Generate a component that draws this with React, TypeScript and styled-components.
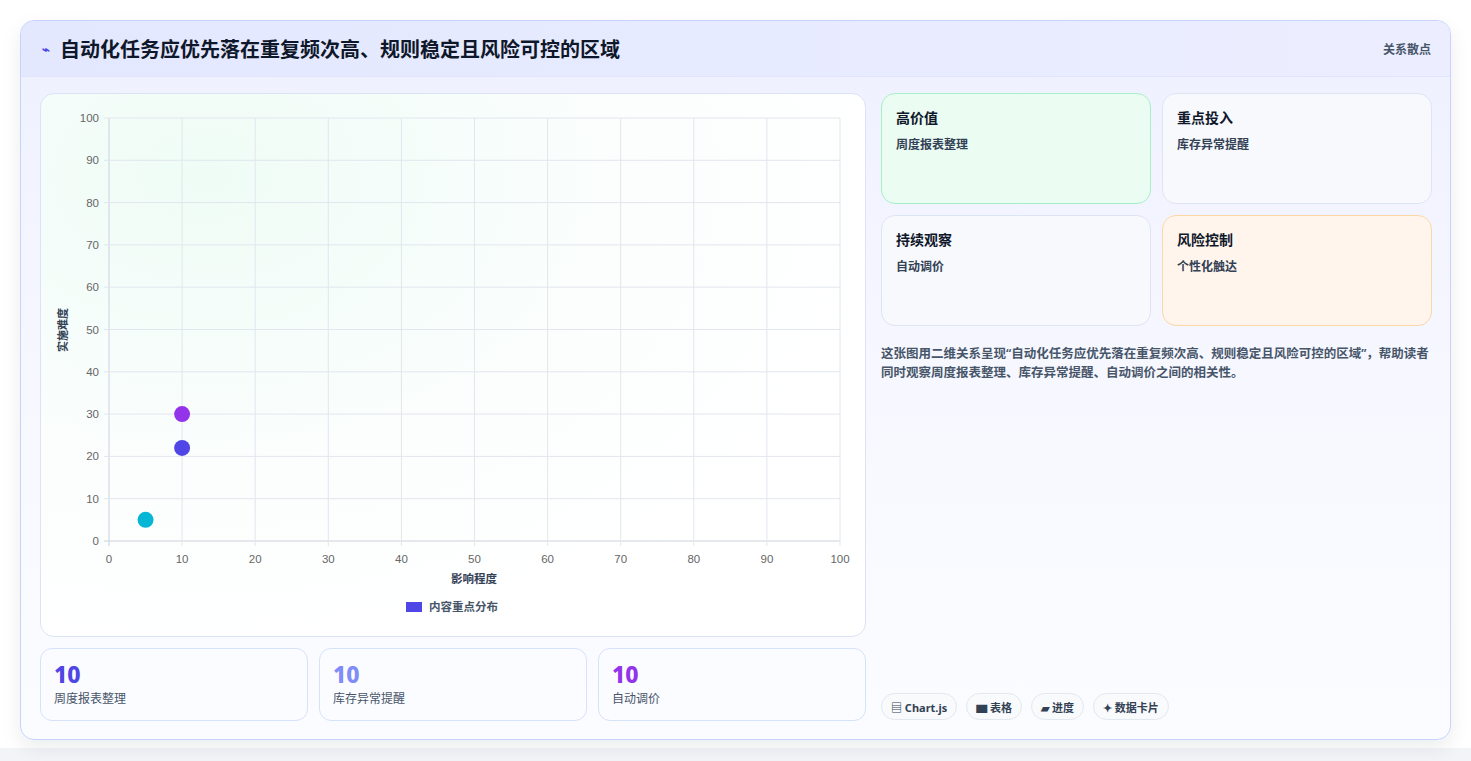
import styled, { createGlobalStyle } from 'styled-components'

const Global = createGlobalStyle`
  html, body { margin: 0; padding: 0; background: #fff; }
  body { font-family: "Noto Sans", "Noto Sans CJK SC", sans-serif; color: #0f172a; }
`

const Page = styled.div`
  padding: 20px 20px 21px 20px;
  height: 761px;
  box-sizing: border-box;
  background: linear-gradient(#fff 0, #fff 748px, #f3f4f8 748px);
`
const Card = styled.div`
  width: 1431px;
  height: 720px;
  box-sizing: border-box;
  border: 1px solid #c7d2fe;
  border-radius: 14px;
  overflow: hidden;
  background: linear-gradient(180deg, #eef0ff 0%, #f8f9ff 60%, #fbfcff 100%);
  box-shadow: 0 8px 20px rgba(15, 23, 42, 0.08);
  display: flex;
  flex-direction: column;
`
const Header = styled.div`
  height: 55px;
  flex-shrink: 0;
  display: flex;
  align-items: center;
  justify-content: space-between;
  padding: 0 19px 0 21px;
  background: linear-gradient(90deg, #e3e8ff, #eceeff);
  border-bottom: 1px solid #e0e5fb;
`
const Title = styled.h1`
  margin: 0;
  font-size: 20px;
  font-weight: 700;
  display: flex;
  align-items: center;
  gap: 10px;
`
const Bolt = styled.span`
  color: #4f46e5;
  font-size: 13px;
`
const HeaderTag = styled.span`
  font-size: 12px;
  color: #475569;
  font-weight: 600;
`
const Body = styled.div`
  flex: 1;
  display: grid;
  grid-template-columns: 826px 551px;
  gap: 15px;
  padding: 16px 18px 19px 19px;
`
const LeftCol = styled.div`
  display: flex;
  flex-direction: column;
  gap: 11px;
`
const ChartCard = styled.div`
  height: 544px;
  box-sizing: border-box;
  border: 1px solid #dbe3f5;
  border-radius: 14px;
  background: radial-gradient(ellipse at 20% 15%, #effcf6 0%, #fbfefd 45%, #ffffff 75%);
`
const Stats = styled.div`
  display: grid;
  grid-template-columns: repeat(3, 1fr);
  gap: 11px;
`
const Stat = styled.div`
  height: 73px;
  box-sizing: border-box;
  border: 1px solid #d6e2f8;
  border-radius: 12px;
  background: #fbfcff;
  padding: 11px 13px;
`
const StatNum = styled.div<{ $c: string }>`
  font-size: 23px;
  font-weight: 800;
  color: ${p => p.$c};
  line-height: 28px;
`
const StatLabel = styled.div`
  font-size: 12px;
  color: #475569;
  margin-top: 1px;
`
const RightCol = styled.div`
  display: flex;
  flex-direction: column;
`
const Quads = styled.div`
  display: grid;
  grid-template-columns: 1fr 1fr;
  gap: 11px 11px;
`
const Quad = styled.div<{ $bg: string; $bd: string }>`
  height: 111px;
  box-sizing: border-box;
  border: 1px solid ${p => p.$bd};
  background: ${p => p.$bg};
  border-radius: 14px;
  padding: 13px 14px;
`
const QuadTitle = styled.div`
  font-size: 14px;
  font-weight: 700;
  color: #0f172a;
`
const QuadText = styled.div`
  font-size: 12px;
  font-weight: 600;
  color: #334155;
  margin-top: 8px;
`
const Desc = styled.p`
  margin: 18px 0 0;
  font-size: 12.5px;
  line-height: 19px;
  font-weight: 600;
  color: #475569;
`
const Tags = styled.div`
  margin-top: auto;
  display: flex;
  gap: 9px;
  margin-bottom: 1px;
`
const Tag = styled.span`
  height: 27px;
  box-sizing: border-box;
  padding: 0 9px;
  border: 1px solid #e2e8f0;
  border-radius: 14px;
  background: #f8fafc;
  font-size: 11px;
  font-weight: 700;
  color: #334155;
  display: flex;
  align-items: center;
  gap: 3px;
`

const X0 = 68, X1 = 799, Y0 = 447, Y1 = 24
const ticks = [0, 10, 20, 30, 40, 50, 60, 70, 80, 90, 100]
const sx = (v: number) => X0 + ((X1 - X0) * v) / 100
const sy = (v: number) => Y0 - ((Y0 - Y1) * v) / 100

function Chart() {
  return (
    <svg width="824" height="542" style={{ display: 'block' }}>
      {ticks.map(t => (
        <g key={t}>
          <line x1={sx(t)} x2={sx(t)} y1={Y1} y2={Y0 + 5} stroke={t === 0 ? '#cbd2dc' : '#e2e6ee'} />
          <line x1={X0 - 5} x2={X1} y1={sy(t)} y2={sy(t)} stroke={t === 0 ? '#cbd2dc' : '#e2e6ee'} />
          <text x={sx(t)} y={Y0 + 22} fontSize="11.5" fill="#666" textAnchor="middle" fontFamily="Liberation Sans, sans-serif">{t}</text>
          <text x={X0 - 10} y={sy(t) + 4} fontSize="11.5" fill="#666" textAnchor="end" fontFamily="Liberation Sans, sans-serif">{t}</text>
        </g>
      ))}
      <text x="433" y="489" fontSize="11.5" fontWeight="600" fill="#334155" textAnchor="middle">影响程度</text>
      <text transform="translate(26 236) rotate(-90)" fontSize="11" fontWeight="600" fill="#334155" textAnchor="middle">实施难度</text>
      <circle cx={sx(10)} cy={sy(30)} r="8" fill="#9333ea" />
      <circle cx={sx(10)} cy={sy(22)} r="8" fill="#4f46e5" />
      <circle cx={sx(5)} cy={sy(5)} r="8" fill="#06b6d4" />
      <rect x="365" y="508" width="16" height="10" fill="#4f46e5" />
      <text x="388" y="517" fontSize="11.5" fontWeight="600" fill="#475569">内容重点分布</text>
    </svg>
  )
}

export default function App() {
  return (
    <Page>
      <Global />
      <Card>
        <Header>
          <Title><Bolt>⌁</Bolt>自动化任务应优先落在重复频次高、规则稳定且风险可控的区域</Title>
          <HeaderTag>关系散点</HeaderTag>
        </Header>
        <Body>
          <LeftCol>
            <ChartCard><Chart /></ChartCard>
            <Stats>
              <Stat><StatNum $c="#4f46e5">10</StatNum><StatLabel>周度报表整理</StatLabel></Stat>
              <Stat><StatNum $c="#818cf8">10</StatNum><StatLabel>库存异常提醒</StatLabel></Stat>
              <Stat><StatNum $c="#9333ea">10</StatNum><StatLabel>自动调价</StatLabel></Stat>
            </Stats>
          </LeftCol>
          <RightCol>
            <Quads>
              <Quad $bg="#ebfcf3" $bd="#a7efc6"><QuadTitle>高价值</QuadTitle><QuadText>周度报表整理</QuadText></Quad>
              <Quad $bg="#f7f9fd" $bd="#dde5f5"><QuadTitle>重点投入</QuadTitle><QuadText>库存异常提醒</QuadText></Quad>
              <Quad $bg="#f7f9fd" $bd="#dde5f5"><QuadTitle>持续观察</QuadTitle><QuadText>自动调价</QuadText></Quad>
              <Quad $bg="#fff5ec" $bd="#fbd7a8"><QuadTitle>风险控制</QuadTitle><QuadText>个性化触达</QuadText></Quad>
            </Quads>
            <Desc>这张图用二维关系呈现“自动化任务应优先落在重复频次高、规则稳定且风险可控的区域”，帮助读者同时观察周度报表整理、库存异常提醒、自动调价之间的相关性。</Desc>
            <Tags>
              <Tag>▤ Chart.js</Tag>
              <Tag>▆ 表格</Tag>
              <Tag>▰ 进度</Tag>
              <Tag>✦ 数据卡片</Tag>
            </Tags>
          </RightCol>
        </Body>
      </Card>
    </Page>
  )
}
